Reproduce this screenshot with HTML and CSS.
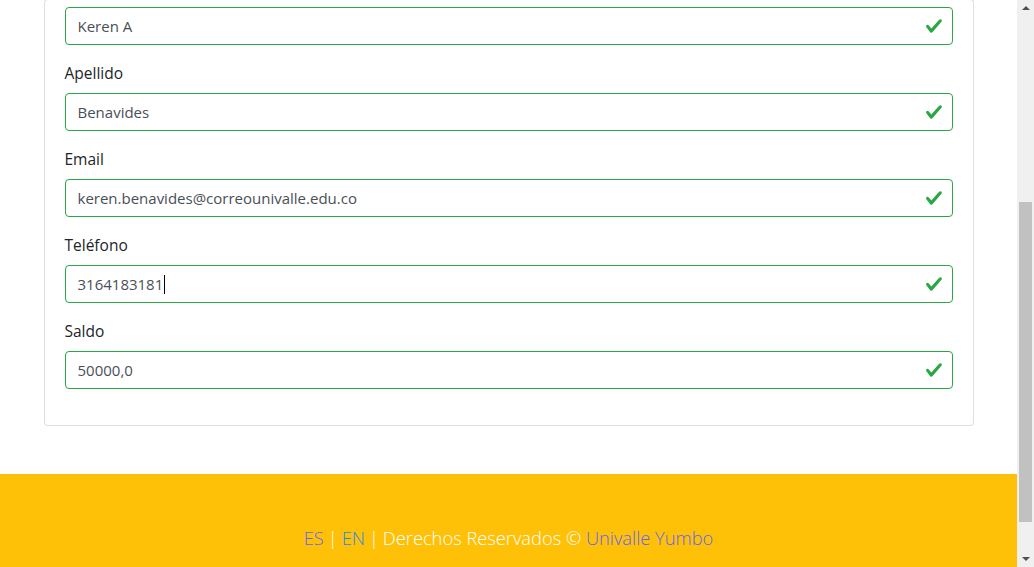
FILE: index.html
```html
<!DOCTYPE html>
<html lang="es">
<head>
<meta charset="utf-8">
<title>Editar cliente</title>
<link rel="stylesheet" href="styles.css">
</head>
<body>
<div class="window">
  <main class="page">
    <div class="container">
      <div class="card">
        <div class="card-body">
          <form class="form">
            <div class="form-group">
              <div class="form-control is-valid" aria-label="Nombre">Keren A</div>
            </div>
            <div class="form-group">
              <label class="label">Apellido</label>
              <div class="form-control is-valid">Benavides</div>
            </div>
            <div class="form-group">
              <label class="label">Email</label>
              <div class="form-control is-valid">keren.benavides@correounivalle.edu.co</div>
            </div>
            <div class="form-group">
              <label class="label">Teléfono</label>
              <div class="form-control is-valid">3164183181<span class="caret"></span></div>
            </div>
            <div class="form-group">
              <label class="label">Saldo</label>
              <div class="form-control is-valid">50000,0</div>
            </div>
          </form>
        </div>
      </div>
    </div>
    <footer class="footer">
      <p class="footer-text"><a class="lang lang-es" href="#">ES</a><span class="sep">|</span><a class="lang lang-en" href="#">EN</a><span class="sep">|</span>Derechos Reservados © <a class="brand" href="#">Univalle Yumbo</a></p>
    </footer>
  </main>
  <div class="scrollbar">
    <span class="arrow arrow-up"></span>
    <div class="track"><div class="thumb"></div></div>
    <span class="arrow arrow-down"></span>
  </div>
</div>
</body>
</html>
```
FILE: styles.css
```css
* { box-sizing: border-box; }
html, body { margin: 0; padding: 0; }
body {
  font-family: "Open Sans", "Liberation Sans", sans-serif;
  font-size: 15px;
  line-height: 1.5;
  color: #212529;
  background: #fff;
}
.window {
  display: flex;
  width: 1034px;
  height: 567px;
  overflow: hidden;
}
.page {
  flex: 1;
  height: 567px;
  display: flex;
  flex-direction: column;
  justify-content: flex-end;
  overflow: hidden;
}
.container {
  width: 960px;
  padding: 0 15px;
  margin: 0 auto 48px;
  flex-shrink: 0;
}
.card {
  border: 1px solid rgba(0,0,0,.125);
  border-radius: 4px;
  background: #fff;
}
.card-body { padding: 7px 20px 20px; }
.form { margin: 0; }
.form-group { margin-bottom: 16px; }
.label {
  display: block;
  margin-bottom: 8px;
  line-height: 24px;
  font-size: 15.5px;
  color: #212529;
}
.form-control {
  height: 38px;
  padding: 6px 12px;
  line-height: 24px;
  font-size: 15px;
  color: #495057;
  border: 1px solid #28a745;
  border-radius: 4px;
  background-color: #fff;
  background-image: url("data:image/svg+xml,%3csvg xmlns='http://www.w3.org/2000/svg' width='8' height='8' viewBox='0 0 8 8'%3e%3cpath fill='%2328a745' d='M2.3 6.73L.6 4.53c-.4-1.04.46-1.4 1.1-.8l1.1 1.4 3.4-3.8c.6-.63 1.6-.27 1.2.7l-4 4.6c-.43.5-.8.4-1.1.1z'/%3e%3c/svg%3e");
  background-repeat: no-repeat;
  background-position: right 9px center;
  background-size: 18px 18px;
  white-space: nowrap;
}
.caret {
  display: inline-block;
  width: 1px;
  height: 19px;
  background: #000;
  vertical-align: -4px;
  margin-left: 1px;
}
.footer {
  flex-shrink: 0;
  height: 93px;
  background: #ffc107;
  padding-top: 49px;
}
.footer-text {
  margin: 0;
  text-align: center;
  font-family: "Open Sans", "Liberation Sans", sans-serif;
  font-weight: 300;
  font-size: 18.3px;
  line-height: 30px;
  color: #fff;
}
.sep { margin: 0 4px; }
.lang, .brand { text-decoration: none; }
.lang-es { color: #6466ee; }
.lang-en { color: #1a8cf0; }
.brand { color: #6466ee; }
.scrollbar {
  width: 17px;
  flex-shrink: 0;
  background: #f0f0f0;
  display: flex;
  flex-direction: column;
  align-items: center;
}
.arrow {
  width: 0;
  height: 0;
  border-left: 4px solid transparent;
  border-right: 4px solid transparent;
}
.arrow-up { border-bottom: 4px solid #505050; margin-top: 6px; }
.arrow-down { border-top: 4px solid #505050; margin-bottom: 6px; }
.track {
  flex: 1;
  width: 100%;
  display: flex;
  flex-direction: column;
  justify-content: flex-end;
  padding: 0 2px 35px;
}
.thumb {
  height: 320px;
  background: #c1c1c1;
}
```
